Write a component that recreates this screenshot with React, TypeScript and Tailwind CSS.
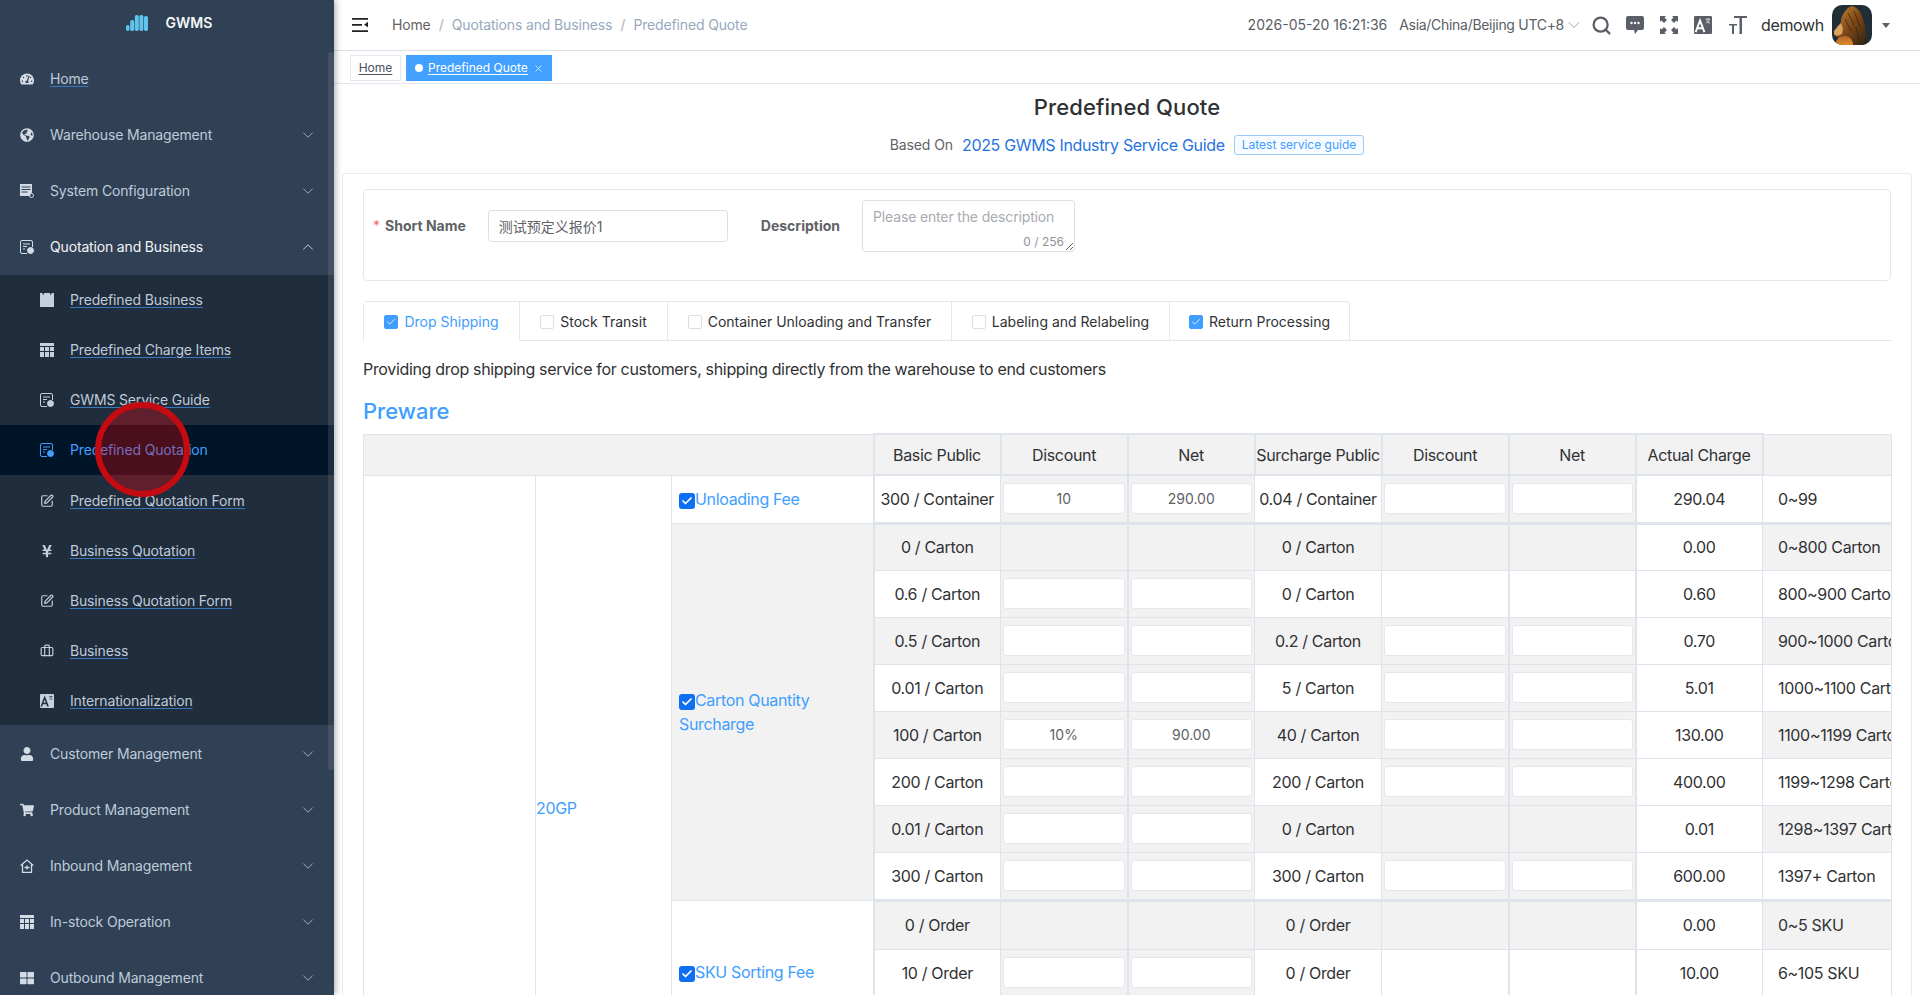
import { ChevronDown, ChevronUp, Check, Search, X } from "lucide-react";
import { FaTachometerAlt, FaGlobeAmericas, FaUser, FaShoppingCart, FaYenSign, FaThLarge } from "react-icons/fa";
import { LuSquarePen, LuBriefcase } from "react-icons/lu";
import type { ReactNode } from "react";

const TableIcon = () => (
  <svg viewBox="0 0 14 14" className="h-[14px] w-[14px]" fill="currentColor">
    <path d="M0 0h14v3H0zM0 4h4v4H0zM5 4h4v4H5zM10 4h4v4h-4zM0 9h4v5H0zM5 9h4v5H5zM10 9h4v5h-4z" />
  </svg>
);

const CalendarIcon = () => (
  <svg viewBox="0 0 14 14" className="h-[14px] w-[14px]" fill="currentColor">
    <path d="M0 0h2.500v1.500H4V0h6v1.500h1.500V0H14v14H0z" />
  </svg>
);

const DocUserIcon = () => (
  <svg viewBox="0 0 14 14" className="h-[14px] w-[14px]" fill="none" stroke="currentColor" strokeWidth="1">
    <path d="M7 13.500H2A1.500 1.500 0 0 1 .5 12V2A1.500 1.500 0 0 1 2 .5h9A1.500 1.500 0 0 1 12.500 2v5" />
    <path d="M3 4h7M3 6.500h4M3 9h2" />
    <circle cx="10.500" cy="10.500" r="3" fill="currentColor" />
  </svg>
);

const ServerIcon = () => (
  <svg viewBox="0 0 14 14" className="h-[14px] w-[14px]" fill="currentColor">
    <path d="M0 0h12v8.500a3.500 3.500 0 0 0-2 3.500H0zM1.500 2.500v1h9v-1zM1.500 5v1h9V5zM1.500 7.500v1h6v-1z" fillRule="evenodd" />
    <circle cx="11.500" cy="11.500" r="2" fill="none" stroke="currentColor" />
  </svg>
);

const HouseInIcon = () => (
  <svg viewBox="0 0 14 14" className="h-[14px] w-[14px]" fill="none" stroke="currentColor" strokeWidth="1.300">
    <path d="M.7 6.500 7 1l6.300 5.500M2.500 5.500v7.800h9V5.500M4.500 8.500h5M7 6.500v4" />
  </svg>
);

const TranslateIcon = ({ className, fg = "#fff" }: { className: string; fg?: string }) => (
  <svg viewBox="0 0 14 14" className={className}>
    <rect width="14" height="14" rx="1" fill="currentColor" />
    <path d="M1.300 12.500 4.700 3.500 8.100 12.500M2.500 9.500h4.400" fill="none" stroke={fg} strokeWidth="1.500" />
    <path d="M9 2.500h3.500M10.800 1.800v.7M9.500 5.500c1.300-.7 2-1.700 2.300-3M9.800 3.500c.5 1 1.300 1.700 2.700 2" fill="none" stroke={fg} strokeWidth=".6" />
  </svg>
);

const I = ({ children }: { children: ReactNode }) => (
  <span className="flex h-[14px] w-[14px] shrink-0 items-center justify-center">{children}</span>
);

const topItems: { label: string; icon: ReactNode; link?: boolean; open?: boolean; noArrow?: boolean }[] = [
  { label: "Home", icon: <FaTachometerAlt size={14} />, link: true, noArrow: true },
  { label: "Warehouse Management", icon: <FaGlobeAmericas size={14} /> },
  { label: "System Configuration", icon: <ServerIcon /> },
  { label: "Quotation and Business", icon: <DocUserIcon />, open: true },
];

const subItems: { label: string; icon: ReactNode; active?: boolean }[] = [
  { label: "Predefined Business", icon: <CalendarIcon /> },
  { label: "Predefined Charge Items", icon: <TableIcon /> },
  { label: "GWMS Service Guide", icon: <DocUserIcon /> },
  { label: "Predefined Quotation", icon: <DocUserIcon />, active: true },
  { label: "Predefined Quotation Form", icon: <LuSquarePen size={14} /> },
  { label: "Business Quotation", icon: <FaYenSign size={14} /> },
  { label: "Business Quotation Form", icon: <LuSquarePen size={14} /> },
  { label: "Business", icon: <LuBriefcase size={14} /> },
  { label: "Internationalization", icon: <TranslateIcon className="h-[14px] w-[14px] text-[#c5d0dc]" fg="#1f2d3d" /> },
];

const bottomItems: { label: string; icon: ReactNode }[] = [
  { label: "Customer Management", icon: <FaUser size={14} /> },
  { label: "Product Management", icon: <FaShoppingCart size={14} /> },
  { label: "Inbound Management", icon: <HouseInIcon /> },
  { label: "In-stock Operation", icon: <TableIcon /> },
  { label: "Outbound Management", icon: <FaThLarge size={14} /> },
];

const MenuRow = ({ label, icon, link, open, noArrow, low }: { label: string; icon: ReactNode; link?: boolean; open?: boolean; noArrow?: boolean; low?: boolean }) => (
  <div className={`flex h-[56px] shrink-0 items-center pl-5 pr-[17px] text-sm tracking-[-0.16px] ${low ? "pt-px" : ""} ${open ? "text-[#f4f4f5]" : "text-[#bfcbd9]"}`}>
    <span className="mr-4 text-[#d3dbe4]"><I>{icon}</I></span>
    <span className={`flex-1 ${link ? "underline decoration-[#3a78bd] underline-offset-2" : ""}`}>{label}</span>
    {!noArrow && (open ? <ChevronUp size={18} strokeWidth={1} /> : <ChevronDown size={18} strokeWidth={1} />)}
  </div>
);

const Sidebar = () => (
  <aside className="relative z-10 flex h-full w-[334px] shrink-0 flex-col overflow-hidden bg-[#304156] shadow-[2px_0_6px_rgba(0,21,41,0.3)]">
    <div className="flex h-[51px] shrink-0 items-center justify-center gap-[18px] pb-[5px] pl-[4px]">
      <svg viewBox="0 0 22 16" className="h-4 w-[22px]" fill="#5fc5ef">
        <rect x="0" y="10" width="3.500" height="6" rx="1.700" />
        <rect x="4.200" y="5" width="4" height="11" rx="1.700" />
        <rect x="8.800" y="0" width="4" height="16" rx="1.800" />
        <rect x="13.400" y="0" width="4" height="16" rx="1.800" />
        <rect x="18" y="1" width="4" height="15" rx="1.800" />
      </svg>
      <span className="text-sm font-semibold text-[#f4f6f8]">GWMS</span>
    </div>
    {topItems.map((m) => (
      <MenuRow key={m.label} {...m} />
    ))}
    <div className="bg-[#1f2d3d]">
      {subItems.map((s, i) => (
        <div key={s.label} className={`flex h-[50px] items-center pl-10 text-sm tracking-[-0.16px] ${i > 3 ? "pt-px" : ""} ${s.active ? "bg-[#001528] text-[#409eff]" : "text-[#bfcbd9]"}`}>
          <span className={`mr-4 ${s.active ? "" : "text-[#c5d0dc]"}`}><I>{s.icon}</I></span>
          <span className={s.active ? "" : "underline decoration-[#3a78bd] underline-offset-2"}>{s.label}</span>
        </div>
      ))}
    </div>
    {bottomItems.map((m) => (
      <MenuRow key={m.label} {...m} low />
    ))}
    <div className="absolute right-0 top-[52px] h-[718px] w-[6px] rounded-[3px] bg-[#90939933]" />
  </aside>
);

const Avatar = () => (
  <svg viewBox="0 0 40 40" className="h-10 w-10 rounded-[10px]">
    <defs>
      <linearGradient id="mane" x1="0" y1="0" x2="1" y2="1">
        <stop offset="0" stopColor="#c98a35" />
        <stop offset="0.55" stopColor="#7a4416" />
        <stop offset="1" stopColor="#2c2116" />
      </linearGradient>
      <linearGradient id="glow" x1="0" y1="0" x2="0" y2="1">
        <stop offset="0" stopColor="#b0682a" />
        <stop offset="1" stopColor="#e08a2a" />
      </linearGradient>
    </defs>
    <rect width="40" height="40" fill="#222e36" />
    <path d="M20 1c5 1 9 6 11 13 3 9 4 18 3 26H8l-2-8-4-2 2-4 4-3 1-8c1-6 6-13 11-14z" fill="url(#mane)" />
    <path d="M2 26l4-5 3-3 2 6-1 5-5 2-3-2z" fill="#d9a45c" />
    <path d="M3 40c1-6 5-9 11-9 5 1 7 5 7 9z" fill="url(#glow)" />
    <path d="M16 8l6 12M22 6l6 16M13 14l6 12M24 22l3 14" stroke="#3d2511" strokeWidth=".8" fill="none" />
  </svg>
);

const Header = () => (
  <header className="flex h-[51px] shrink-0 items-center border-b border-[#dcdfe6] bg-white text-sm">
    <svg viewBox="0 0 16 14" className="ml-[18px] h-[14px] w-4" fill="#222">
      <path d="M0 0h16v1.700H0zM0 6h10v1.700H0zM0 12.300h16V14H0zM16 3.800v5.500L12 6.800z" />
    </svg>
    <div className="ml-[24px] flex items-center tracking-[-0.15px] text-[#97a8be]">
      <span className="text-[#606266]">Home</span>
      <span className="mx-[8px] font-semibold text-[#c0c4cc]">/</span>
      <span>Quotations and Business</span>
      <span className="mx-[8px] font-semibold text-[#c0c4cc]">/</span>
      <span>Predefined Quote</span>
    </div>
    <div className="ml-auto flex items-center pr-[30px] text-[#5a5e66]">
      <span>2026-05-20 16:21:36</span>
      <span className="ml-3 tracking-[-0.3px]">Asia/China/Beijing UTC+8</span>
      <ChevronDown size={20} strokeWidth={1} className="-mr-[2px] text-[#909399]" />
      <Search size={21} strokeWidth={2.6} className="ml-[9px]" />
      <svg viewBox="0 0 18 18" className="ml-[14px] h-[18px] w-[18px]" fill="currentColor">
        <path d="M2 0h14a2 2 0 0 1 2 2v10a2 2 0 0 1-2 2h-4l-3 4-1-4H2a2 2 0 0 1-2-2V2a2 2 0 0 1 2-2z" />
        <circle cx="5.500" cy="7" r="1.200" fill="#fff" />
        <circle cx="9" cy="7" r="1.200" fill="#fff" />
        <circle cx="12.500" cy="7" r="1.200" fill="#fff" />
      </svg>
      <svg viewBox="0 0 18 18" className="ml-4 h-[18px] w-[18px]" fill="currentColor">
        <path d="M0 0h6L4.500 1.500 7 4 4 7 1.500 4.500 0 6zM18 0v6l-1.500-1.500L14 7l-3-3 2.500-2.500L12 0zM0 18v-6l1.500 1.500L4 11l3 3-2.500 2.500L6 18zM18 18h-6l1.500-1.500L11 14l3-3 2.500 2.500L18 12z" />
      </svg>
      <TranslateIcon className="ml-4 h-[18px] w-[18px]" />
      <svg viewBox="0 0 18 18" className="ml-[17px] h-[18px] w-[18px]" fill="currentColor">
        <path d="M5 0h13v2h-5v16h-2.500V2H5zM0 8h8v1.600H5v8.400H3V9.600H0z" />
      </svg>
      <span className="ml-[14px] text-base tracking-[-0.33px] text-[#303133]">demowh</span>
      <span className="ml-2"><Avatar /></span>
      <span className="ml-[10px] h-0 w-0 border-x-[4px] border-t-[5px] border-x-transparent border-t-[#5a5e66]" />
    </div>
  </header>
);

const TagsBar = () => (
  <div className="flex h-[33px] shrink-0 items-start gap-[5px] border-b border-[#e4e7ed] bg-white pl-4 pt-[4px] text-xs">
    <span className="flex h-[26px] w-[51px] items-center justify-center border border-[#e4e7ed] text-[#495060] underline underline-offset-2">Home</span>
    <span className="flex h-[26px] w-[146px] items-center bg-[#42a0ff] pl-[9px] text-white">
      <span className="mr-[5px] h-2 w-2 rounded-full bg-white" />
      <span className="underline underline-offset-2">Predefined Quote</span>
      <X size={11} strokeWidth={1.5} className="ml-[5px]" />
    </span>
  </div>
);

const Box = ({ on }: { on?: boolean }) => (
  <span className={`mr-[6px] flex h-[14px] w-[14px] items-center justify-center rounded-[2px] border ${on ? "border-[#409eff] bg-[#409eff]" : "border-[#dcdfe6] bg-white"}`}>
    {on && <Check size={10} strokeWidth={2} className="text-white" />}
  </span>
);

const tabs = [
  { label: "Drop Shipping", on: true, active: true, w: "w-[155px]" },
  { label: "Stock Transit", w: "w-[148px]" },
  { label: "Container Unloading and Transfer", w: "w-[284px]" },
  { label: "Labeling and Relabeling", w: "w-[218px]" },
  { label: "Return Processing", on: true, w: "w-[180px]" },
];

const Tabs = () => (
  <div className="flex h-[40px] border-b border-[#e4e7ed] text-sm">
    <div className="flex rounded-t-[4px] border border-b-0 border-[#e4e7ed]">
      {tabs.map((t, i) => (
        <div
          key={t.label}
          className={`-mb-px flex h-[39px] items-center justify-center ${t.w} ${i ? "border-l border-[#e4e7ed]" : ""} ${t.active ? "bg-white text-[#409eff]" : "text-[#303133]"}`}
        >
          <Box on={t.on} />
          {t.label}
        </div>
      ))}
    </div>
  </div>
);

const BlueCheck = () => (
  <span className="inline-flex h-4 w-4 items-center justify-center rounded-[3px] bg-[#0f6ff2] align-[-2px]">
    <Check size={12} strokeWidth={3.5} className="text-white" />
  </span>
);

type Field = string | null | { v: string };
const inp = (v = ""): Field => ({ v });
const headers = ["Basic Public", "Discount", "Net", "Surcharge Public", "Discount", "Net", "Actual Charge"];

const unloading: Field[] = ["300 / Container", inp("10"), inp("290.00"), "0.04 / Container", inp(), inp(), "290.04", "0~99"];
const carton: Field[][] = [
  ["0 / Carton", null, null, "0 / Carton", null, null, "0.00", "0~800 Carton"],
  ["0.6 / Carton", inp(), inp(), "0 / Carton", null, null, "0.60", "800~900 Carton"],
  ["0.5 / Carton", inp(), inp(), "0.2 / Carton", inp(), inp(), "0.70", "900~1000 Carton"],
  ["0.01 / Carton", inp(), inp(), "5 / Carton", inp(), inp(), "5.01", "1000~1100 Carton"],
  ["100 / Carton", inp("10%"), inp("90.00"), "40 / Carton", inp(), inp(), "130.00", "1100~1199 Carton"],
  ["200 / Carton", inp(), inp(), "200 / Carton", inp(), inp(), "400.00", "1199~1298 Carton"],
  ["0.01 / Carton", inp(), inp(), "0 / Carton", null, null, "0.01", "1298~1397 Carton"],
  ["300 / Carton", inp(), inp(), "300 / Carton", inp(), inp(), "600.00", "1397+ Carton"],
];
const sku: Field[][] = [
  ["0 / Order", null, null, "0 / Order", null, null, "0.00", "0~5 SKU"],
  ["10 / Order", inp(), inp(), "0 / Order", null, null, "10.00", "6~105 SKU"],
];

const thickLeft = [true, false, true, false, false, true, true, false];

const Cells = ({ row, gray, groupStart }: { row: Field[]; gray: boolean; groupStart?: boolean }) => (
  <>
    {row.map((f, i) => {
      const tone = gray ? "bg-[#f2f2f3]" : "bg-white";
      const edge = `${thickLeft[i] ? "border-l-2" : "border-l"} ${groupStart ? "border-t-[3px]" : "border-t"} border-r border-b border-[#dfe3eb]`;
      if (f !== null && typeof f === "object") {
        return (
          <td key={i} className={`${edge} bg-[#f2f2f3] p-[2px]`}>
            <div className="flex h-[31px] items-center justify-center rounded-[3px] border border-[#e4e7ed] bg-white text-sm tracking-normal text-[#606266]">{f.v}</div>
          </td>
        );
      }
      const bg = i === 6 ? "bg-white" : tone;
      const align = i === 7 ? "pl-[15px] text-left" : "text-center";
      return (
        <td key={i} className={`${edge} ${bg} ${align} overflow-hidden whitespace-nowrap`}>
          {f}
        </td>
      );
    })}
  </>
);

const labelCell = "border border-[#dfe3eb] px-[7px] text-left align-middle text-[#409eff]";

const QuoteTable = () => (
  <table className="w-[1528px] table-fixed border-collapse text-base tracking-[-0.33px] text-[#303133]">
    <colgroup>
      <col className="w-[172px]" />
      <col className="w-[136px]" />
      <col className="w-[202px]" />
      <col className="w-[127px]" />
      <col className="w-[127px]" />
      <col className="w-[127px]" />
      <col className="w-[127px]" />
      <col className="w-[127px]" />
      <col className="w-[127px]" />
      <col className="w-[127px]" />
      <col className="w-[129px]" />
    </colgroup>
    <thead>
      <tr className="h-[41px] bg-[#f2f2f3]">
        <th colSpan={3} className="border border-[#dfe3eb]" />
        {headers.map((h, i) => (
          <th key={i} className="overflow-hidden whitespace-nowrap border-2 border-[#dfe3eb] font-normal">{h}</th>
        ))}
        <th className="border border-[#dfe3eb]" />
      </tr>
    </thead>
    <tbody>
      <tr className="h-[48px]">
        <td rowSpan={14} className="border border-[#dfe3eb]" />
        <td rowSpan={14} className="border border-[#dfe3eb] text-left text-[#409eff]">20GP</td>
        <td className={`${labelCell} bg-white`}><BlueCheck />Unloading Fee</td>
        <Cells row={unloading} gray={false} />
      </tr>
      {carton.map((row, i) => (
        <tr key={i} className={i === 7 ? "h-[48px]" : "h-[47px]"}>
          {i === 0 && (
            <td rowSpan={carton.length} className={`${labelCell} bg-[#f2f2f3] leading-6`}><BlueCheck />Carton Quantity Surcharge</td>
          )}
          <Cells row={row} gray={i % 2 === 0} groupStart={i === 0} />
        </tr>
      ))}
      {sku.map((row, i) => (
        <tr key={i} className={i === 0 ? "h-[49px]" : "h-[47px]"}>
          {i === 0 && (
            <td rowSpan={3} className={`${labelCell} bg-white`}><BlueCheck />SKU Sorting Fee</td>
          )}
          <Cells row={row} gray={i % 2 === 0} groupStart={i === 0} />
        </tr>
      ))}
      <tr className="h-[47px]">
        <Cells row={[null, null, null, null, null, null, null, null]} gray />
      </tr>
      <tr className="h-[97px]">
        <td className={labelCell} />
        <Cells row={[null, null, null, null, null, null, null, null]} gray={false} groupStart />
      </tr>
    </tbody>
  </table>
);

const App = () => (
  <div className="relative flex h-screen w-full overflow-hidden bg-white font-['Inter','Noto_Sans_CJK_SC',sans-serif]">
    <Sidebar />
    <main className="flex min-w-0 flex-1 flex-col overflow-hidden">
      <Header />
      <TagsBar />
      <div className="min-h-0 flex-1 overflow-hidden px-2">
        <h1 className="mt-[7px] text-center text-[22px] leading-8 font-medium tracking-[0.1px] text-[#303133]">Predefined Quote</h1>
        <div className="mt-[10px] flex h-6 items-center justify-center">
          <span className="text-sm tracking-[-0.1px] text-[#606266]">Based On</span>
          <span className="ml-[9px] text-base tracking-[-0.33px] text-[#2673dd]">2025 GWMS Industry Service Guide</span>
          <span className="ml-[9px] flex h-5 items-center rounded-[3px] border border-[#9ecbf8] bg-[#f8fbff] px-[7px] text-xs text-[#409eff]">Latest service guide</span>
        </div>
        <div className="mt-[16px] rounded-t-[4px] border border-b-0 border-[#e6ebf5] px-5 pt-[15px]">
          <div className="flex h-[92px] items-start rounded-[4px] border border-[#e4e7ed] pt-[10px] pl-[9px] text-sm">
            <div className="flex h-[52px] items-center">
              <span className="mr-[5px] text-[#f56c6c]">*</span>
              <span className="font-bold text-[#606266]">Short Name</span>
              <input
                readOnly
                value="测试预定义报价1"
                className="ml-[22px] h-[32px] w-[240px] rounded-[4px] border border-[#dcdfe6] px-[10px] text-[#606266] outline-none"
              />
              <span className="ml-[33px] font-bold text-[#606266]">Description</span>
            </div>
            <div className="relative ml-[22px]">
              <textarea
                readOnly
                placeholder="Please enter the description"
                className="block h-[52px] w-[213px] resize rounded-[4px] border border-[#dcdfe6] px-[10px] py-[4px] leading-[24px] tracking-[-0.15px] text-[#606266] outline-none placeholder:text-[#a8abb2]"
              />
              <span className="absolute right-[11px] bottom-[2px] text-xs text-[#909399]">0 / 256</span>
            </div>
          </div>
          <div className="mt-[20px]"><Tabs /></div>
          <p className="mt-4 text-base leading-6 tracking-[-0.33px] text-[#303133]">Providing drop shipping service for customers, shipping directly from the warehouse to end customers</p>
          <h2 className="mt-[14px] text-[22px] leading-8 font-medium text-[#409eff]">Preware</h2>
          <div className="mt-[6px]"><QuoteTable /></div>
        </div>
      </div>
    </main>
    <div className="absolute left-[95px] top-[402px] z-20 h-[95px] w-[95px] rounded-full border-[6px] border-[#c50b12] bg-[rgba(245,0,5,0.3)]" />
  </div>
);

export default App;
